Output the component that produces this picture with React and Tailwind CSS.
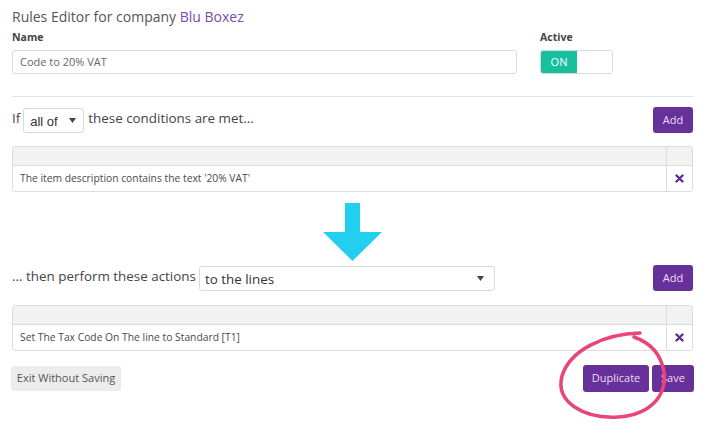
import React from 'react';

const Caret = () => (
  <svg width="7" height="5" viewBox="0 0 7 5"><path d="M0 0h7L3.5 5z" fill="#444" /></svg>
);

const Cross = () => (
  <svg width="9" height="9" viewBox="0 0 9 9"><path d="M1.5 1.5l6 6M7.5 1.5l-6 6" stroke="#5b2d8e" strokeWidth="2.4" strokeLinecap="round" /></svg>
);

const RuleTable = ({ text }) => (
  <div className="border border-[#dcdcdc] rounded-[3px] overflow-hidden">
    <div className="flex h-[19px] bg-[#f2f2f2] border-b border-[#dcdcdc]">
      <div className="flex-1" />
      <div className="w-[26px] border-l border-[#dcdcdc]" />
    </div>
    <div className="flex h-[25px] bg-white">
      <div className="flex-1 flex items-center pl-[7px] text-[10.3px] text-[#4a4a4a]">{text}</div>
      <div className="w-[26px] border-l border-[#dcdcdc] flex items-center justify-center"><Cross /></div>
    </div>
  </div>
);

const AddBtn = () => (
  <button className="w-[40px] h-[26px] rounded-[3px] bg-[#68309a] text-[#e9def3] text-[11px]">Add</button>
);

const App = () => {
  return (
    <div className="w-[704px] h-[432px] bg-white pl-[12px] pr-[11px] relative" style={{ fontFamily: '"Open Sans", sans-serif' }}>
      {/* header */}
      <div className="pt-[7px] h-[30px] text-[14px] leading-[20px] text-[#555]">
        Rules Editor for company <span className="text-[#7a4bb0]">Blu Boxez</span>
      </div>

      <div className="flex gap-[23px]">
        <div className="w-[505px]">
          <div className="h-[20px] text-[10.5px] font-bold text-[#444] leading-[14px]">Name</div>
          <div className="h-[24px] border border-[#d9d9d9] rounded-[3px] flex items-center pl-[7px] text-[11px] text-[#666]">Code to 20% VAT</div>
        </div>
        <div>
          <div className="h-[20px] text-[10.5px] font-bold text-[#444] leading-[14px]">Active</div>
          <div className="flex w-[73px] h-[24px] border border-[#d9d9d9] rounded-[3px] overflow-hidden">
            <div className="w-[36px] bg-[#16bf9d] text-white text-[11px] flex items-center justify-center">ON</div>
            <div className="flex-1 bg-white" />
          </div>
        </div>
      </div>

      <div className="mt-[22px] border-t border-[#e2e2e2]" />

      {/* conditions */}
      <div className="flex items-center justify-between mt-[10px]">
        <div className="flex items-center text-[13.4px] text-[#444]">
          <span className="mr-[3px] -mt-[4px]">If</span>
          <div className="w-[61px] h-[25px] border border-[#d9d9d9] rounded-[3px] flex items-center pl-[6px] gap-[11px] text-[13px] text-[#333]" style={{ fontFamily: '"Liberation Sans", sans-serif' }}>
            <span className="mt-[3px]">all of</span>
            <Caret />
          </div>
          <span className="ml-[4px] -mt-[4px]">these conditions are met...</span>
        </div>
        <AddBtn />
      </div>

      <div className="mt-[13px]">
        <RuleTable text="The item description contains the text '20% VAT'" />
      </div>

      <div className="h-[73px] flex justify-center">
        <svg width="60" height="60" viewBox="0 0 60 60" className="mt-[11px] ml-[1px]">
          <path d="M22 0h15v29h22L29.5 58 0 29h22z" fill="#22cfee" />
        </svg>
      </div>

      {/* actions */}
      <div className="flex items-center justify-between">
        <div className="flex items-center text-[13.4px] text-[#444]">
          <span className="mr-[3px] -mt-[4px]">... then perform these actions</span>
          <div className="w-[296px] h-[25px] border border-[#d9d9d9] rounded-[3px] flex items-center justify-between pl-[5px] pr-[10px] text-[13.4px] text-[#333]">
            <span className="mt-[3px]">to the lines</span>
            <Caret />
          </div>
        </div>
        <AddBtn />
      </div>

      <div className="mt-[14px]">
        <RuleTable text="Set The Tax Code On The line to Standard [T1]" />
      </div>

      {/* footer */}
      <div className="flex items-center justify-between mt-[14px] -ml-[1px] mr-[-1px]">
        <button className="w-[110px] h-[25px] rounded-[3px] bg-[#ececec] text-[11px] text-[#555]">Exit Without Saving</button>
        <div className="flex gap-[3px]">
          <button className="w-[66px] h-[27px] rounded-[3px] bg-[#68309a] text-[#e9def3] text-[11px]">Duplicate</button>
          <button className="w-[42px] h-[27px] rounded-[3px] bg-[#68309a] text-[#e9def3] text-[11px]">Save</button>
        </div>
      </div>

      {/* hand-drawn highlight */}
      <svg className="absolute left-0 top-0 pointer-events-none" width="704" height="432" viewBox="0 0 704 432">
        <path
          d="M640 333 C604 334 570 350 562 376 C555 402 584 419 618 417 C650 415 667 396 664 372 C661 354 651 343 634 337"
          fill="none" stroke="#e9457b" strokeWidth="3.5" strokeLinecap="round" />
      </svg>
    </div>
  );
};

export default App;
